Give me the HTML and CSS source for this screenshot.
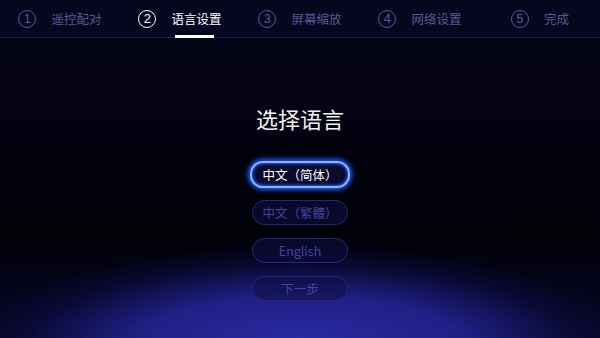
FILE: index.html
```html
<!DOCTYPE html>
<html lang="zh-CN">
<head>
  <meta charset="UTF-8">
  <title>语言设置</title>
  <link rel="stylesheet" href="styles.css">
</head>
<body>

<div class="pasos">
  <div class="paso">
    <span class="num">1</span>
    <span class="nombre">遥控配对</span>
  </div>
  <div class="paso activo">
    <span class="num">2</span>
    <span class="nombre">语言设置</span>
  </div>
  <div class="paso">
    <span class="num">3</span>
    <span class="nombre">屏幕缩放</span>
  </div>
  <div class="paso">
    <span class="num">4</span>
    <span class="nombre">网络设置</span>
  </div>
  <div class="paso">
    <span class="num">5</span>
    <span class="nombre">完成</span>
  </div>
</div>

<div class="contenido">
  <h2>选择语言</h2>
  <div class="opciones">
    <button class="opcion seleccionada">中文（简体）</button>
    <button class="opcion">中文（繁體）</button>
    <button class="opcion">English</button>
    <button class="opcion">下一步</button>
  </div>
</div>

</body>
</html>
```

FILE: styles.css
```css
body {
  margin: 0;
  padding: 0;
  width: 600px;
  height: 338px;
  overflow: hidden;
  font-family: "Noto Sans CJK SC", "Noto Sans", sans-serif;
  background-color: #010108;
  background-image:
    radial-gradient(ellipse 330px 100px at 300px 345px, rgba(42, 42, 165, 1) 0%, rgba(36, 36, 150, 0.85) 50%, rgba(18, 18, 90, 0.35) 82%, rgba(0, 0, 0, 0) 100%),
    linear-gradient(to bottom, #06061c 0%, #020210 40%, #010108 68%, #060628 100%);
  color: #f0f0f0;
}

.pasos {
  display: grid;
  grid-template-columns: repeat(5, 1fr);
  height: 37px;
  border-bottom: 1px solid #1c1c58;
  background-color: #06061e;
}

.paso {
  display: flex;
  align-items: center;
  justify-content: center;
  gap: 15px;
  color: #585898;
  font-size: 12.5px;
}

.num {
  box-sizing: border-box;
  width: 18px;
  height: 18px;
  border: 1.6px solid #585898;
  border-radius: 50%;
  display: flex;
  align-items: center;
  justify-content: center;
  font-family: "Liberation Sans", sans-serif;
  font-size: 13px;
  line-height: 1;
}

.nombre {
  position: relative;
  line-height: 16px;
}

.activo {
  color: #ffffff;
}

.activo .num {
  border-color: #ffffff;
}

.activo .nombre::after {
  content: "";
  position: absolute;
  left: 4px;
  right: 8px;
  top: 24px;
  height: 3px;
  background-color: #ffffff;
}

.contenido {
  display: flex;
  flex-direction: column;
  align-items: center;
}

h2 {
  margin: 65px 0 28px;
  font-size: 22px;
  font-weight: normal;
  line-height: 30px;
  color: #f2f2f2;
}

.opciones {
  display: flex;
  flex-direction: column;
  align-items: center;
  gap: 13px;
}

.opcion {
  box-sizing: border-box;
  width: 96px;
  height: 25px;
  border-radius: 13px;
  border: 1px solid #26267a;
  background-color: rgba(14, 14, 70, 0.55);
  color: #44449a;
  font-family: "Noto Sans CJK SC", "Noto Sans", sans-serif;
  font-size: 12.5px;
  padding: 0;
}

.seleccionada {
  width: 100px;
  height: 27px;
  margin-bottom: -1px;
  border: 2px solid #8ab4ff;
  background-color: #0a0a2c;
  color: #ffffff;
  box-shadow: 0 0 4px 2px #1f5fff, inset 0 0 3px 1px #1f5fff;
}
```
